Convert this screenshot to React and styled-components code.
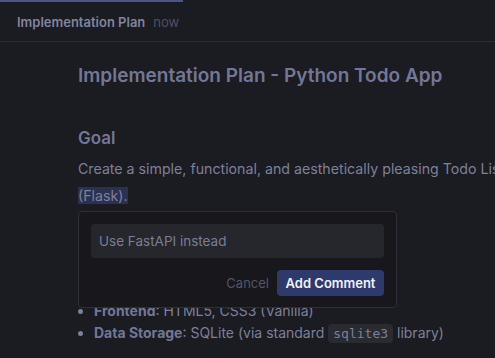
import React from 'react'
import styled, { createGlobalStyle } from 'styled-components'

const Global = createGlobalStyle`
    html, body {
        margin: 0;
        padding: 0;
        background: #1b1b22;
        overflow: hidden;
    }
    body {
        font-family: Inter, "Noto Sans", sans-serif;
        width: 495px;
        height: 358px;
    }
`

function App() {
    return (
        <Page>
            <Global />
            <TopLine />
            <Header>
                <HeaderTitle>Implementation Plan</HeaderTitle>
                <HeaderTime>now</HeaderTime>
            </Header>

            <Content>
                <Title>Implementation Plan - Python Todo App</Title>

                <SectionTitle>Goal</SectionTitle>
                <Para>
                    Create a simple, functional, and aesthetically pleasing Todo List with a Python backend{' '}
                    <Selected>(Flask).</Selected>
                </Para>

                <SectionTitle>Tech Stack</SectionTitle>
                <List>
                    <li><b>Backend</b>: Python (Flask)</li>
                    <li><b>Frontend</b>: HTML5, CSS3 (Vanilla)</li>
                    <li><b>Data Storage</b>: SQLite (via standard <Code>sqlite3</Code> library)</li>
                </List>
            </Content>

            {/* comment popover floats over the document */}
            <CommentBox>
                <Input placeholder="Use FastAPI instead" />
                <Actions>
                    <CancelButton>Cancel</CancelButton>
                    <AddButton>Add Comment</AddButton>
                </Actions>
            </CommentBox>
        </Page>
    )
}

export default App

const Page = styled.div`
    position: relative;
    width: 495px;
    height: 358px;
    overflow: hidden;
    background: #1b1b22;
`

const TopLine = styled.div`
    height: 2px;
    width: 183px;
    background: #4a5488;
`

const Header = styled.div`
    height: 39px;
    display: flex;
    align-items: center;
    gap: 8px;
    padding-left: 17px;
    border-bottom: 1px solid #2b2b33;
`

const HeaderTitle = styled.span`
    font-size: 13px;
    font-weight: 600;
    color: #80849e;
`

const HeaderTime = styled.span`
    font-size: 13px;
    color: #4d5065;
`

const Content = styled.div`
    width: 720px;
    padding: 21px 0 0 78px;
    color: #7d809a;
`

const Title = styled.h1`
    margin: 0;
    font-size: 19px;
    font-weight: 600;
    line-height: 26px;
    color: #737797;
    white-space: nowrap;
`

const SectionTitle = styled.h2`
    margin: 37px 0 0;
    font-size: 17px;
    font-weight: 600;
    line-height: 24px;
    color: #737797;
`

const Para = styled.p`
    margin: 5px 0 0;
    width: 590px;
    font-size: 14.2px;
    line-height: 27px;
    color: #7d809a;
`

const Selected = styled.span`
    background: #2b3150;
`

const List = styled.ul`
    margin: 8px 0 0;
    padding-left: 16px;
    font-size: 14px;
    line-height: 22px;
    color: #7d809a;

    b {
        font-weight: 700;
        color: #737797;
    }
`

const Code = styled.code`
    font-family: "DejaVu Sans Mono", monospace;
    font-size: 13px;
    background: #2a2a31;
    padding: 2px 5px;
    border-radius: 4px;
`

const CommentBox = styled.div`
    position: absolute;
    top: 211px;
    left: 78px;
    width: 319px;
    height: 97px;
    box-sizing: border-box;
    padding: 12px 12px 0 12px;
    background: #17171c;
    border: 1px solid #2f2f37;
    border-radius: 4px;
    display: flex;
    flex-direction: column;
    gap: 12px;
`

const Input = styled.input`
    height: 34px;
    box-sizing: border-box;
    padding: 0 8px;
    background: #26262d;
    border: none;
    border-radius: 4px;
    font-family: Inter, sans-serif;
    font-size: 13.5px;
    outline: none;
    color: #d0d2e0;

    &::placeholder {
        color: #7a7d96;
    }
`

const Actions = styled.div`
    display: flex;
    justify-content: flex-end;
    align-items: center;
    gap: 8px;
`

const CancelButton = styled.button`
    background: none;
    border: none;
    padding: 0;
    font-family: Inter, sans-serif;
    font-size: 13px;
    color: #52556c;
`

const AddButton = styled.button`
    height: 26px;
    width: 107px;
    padding: 0;
    background: #2e3a6b;
    border: none;
    border-radius: 4px;
    font-family: Inter, sans-serif;
    font-size: 13px;
    font-weight: 600;
    color: #f2f3f8;
`
